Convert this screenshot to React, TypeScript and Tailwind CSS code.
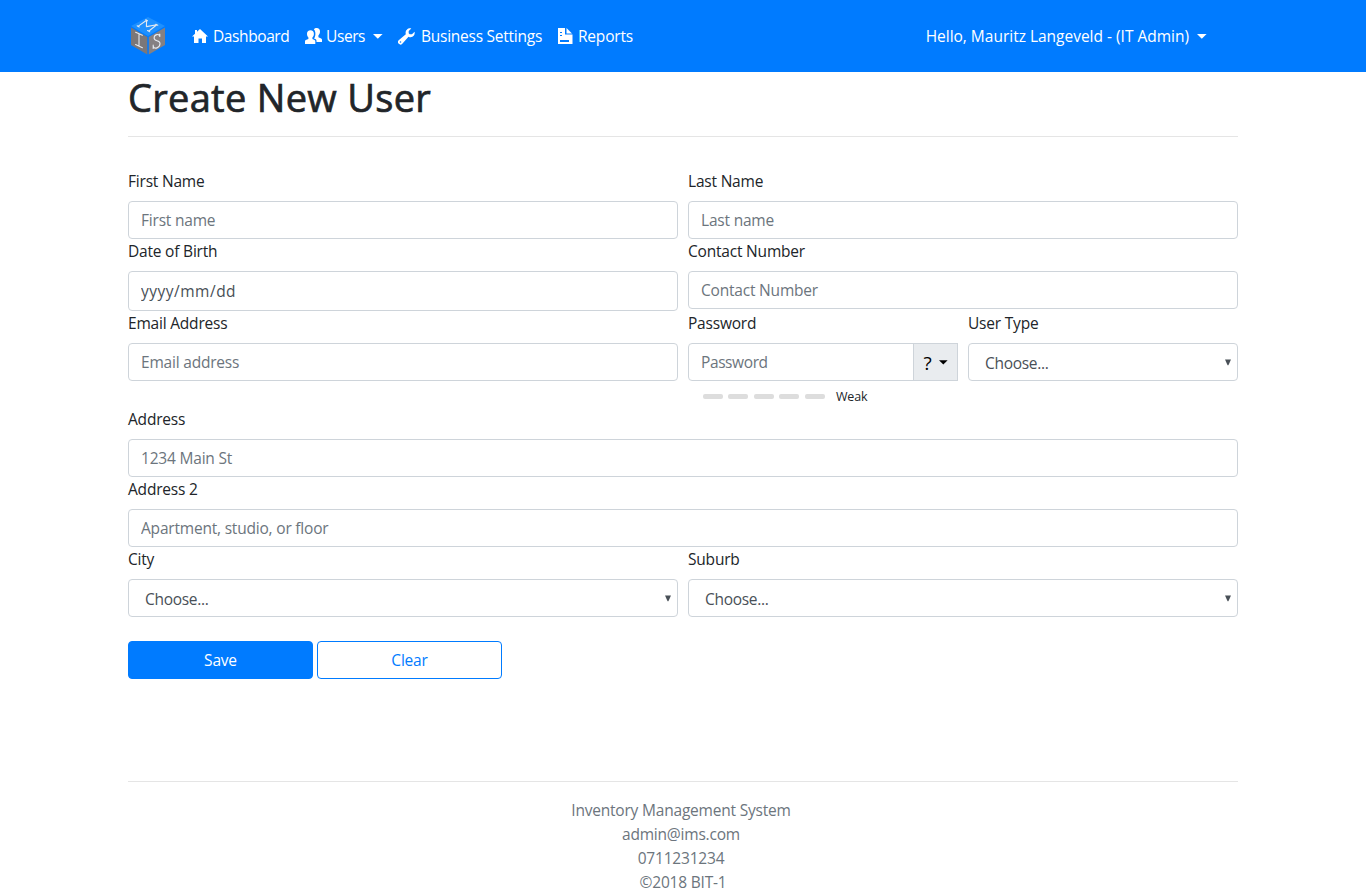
import type { ReactNode } from "react";

const inputBase =
  "block w-full rounded border border-[#ced4da] bg-white px-3 text-[15.5px] tracking-[-0.2px] text-[#495057] placeholder:text-[#6c757d] placeholder:opacity-100 outline-none";

function Field({ label, children, className = "" }: { label: string; children: ReactNode; className?: string }) {
  return (
    <div className={className}>
      <label className="mb-2 block h-6 leading-6">{label}</label>
      {children}
    </div>
  );
}

function Input({ placeholder }: { placeholder: string }) {
  return <input type="text" placeholder={placeholder} className={`${inputBase} h-[38px]`} />;
}

function Select() {
  return (
    <button type="button" className={`${inputBase} flex h-[38px] items-center justify-between pl-4 pr-[6px] text-left`}>
      <span className="pt-[2px] tracking-[-0.3px]">Choose...</span>
      <svg width="6" height="7" viewBox="0 0 6 7" fill="#495057">
        <path d="M0 .5h6L3.400 6.200h-.8z" />
      </svg>
    </button>
  );
}

function Caret({ className = "" }: { className?: string }) {
  return (
    <svg width="10" height="5" viewBox="0 0 10 5" fill="currentColor" className={className}>
      <path d="M0 0h9.6L4.8 4.8z" />
    </svg>
  );
}

function Logo() {
  return (
    <svg width="40" height="40" viewBox="0 0 40 40">
      <path d="M20 1 37 10 20 20 3 10z" fill="#1e90ff" />
      <path d="M3 11.5 19.3 21v17.5L3 29z" fill="#7b7779" />
      <path d="M37 11.5 20.8 21v17.5L37 29z" fill="#858083" />
      <g fill="none" stroke="#e4e9f0" strokeWidth="1.1" strokeLinecap="round" strokeLinejoin="round">
        <path d="M10 10.400 18.600 4.200 18.400 10.600 28.800 8.800 20.600 15.200M17.700 3.800l1.800.9M27.800 8.200l2 1M9.200 9.800l2 1.200M19.500 14.600l2.200 1.100" />
        <path d="M7.600 16.200l6.800 3M11 17.700v12.500M7.600 28.500l6.800 3.200" />
        <path d="M31.700 20.500c-.5-3.200-5.500-2.300-5.600 1.400 0 3.800 5.900 1.800 5.900 5.600 0 4.200-6 6.600-6.700 2.500M31.800 18v2.500M25.200 29v3.500" />
      </g>
    </svg>
  );
}

function HomeIcon() {
  return (
    <svg width="16" height="14" viewBox="0 0 16 14" fill="white">
      <path d="M8 0 16 7.500H14V14H10V9.500H6.500V14H2V7.500H0L3 4.700V1h2v1.800z" />
    </svg>
  );
}

function UsersIcon() {
  return (
    <svg width="17" height="16" viewBox="0 0 17 16" fill="white">
      <path d="M5.500 2.200c2.200 0 3.400 1.300 3.400 3.500 0 1.700-.6 3-1.500 3.800V11l2.100.9c.6.300.8.700.8 1.300V16H0v-2.800c0-.6.2-1 .8-1.300L3.400 11V9.500C2.600 8.700 2 7.400 2 5.700c0-2.200 1.300-3.500 3.500-3.500z" />
      <path d="M8.800 1.200C9.500.4 10.600 0 11.700 0c2.100 0 3.300 1.400 3.300 3.600 0 1.700-.6 3-1.600 3.800v1.800l2.700 1.200c.6.300.9.700.9 1.300V14h-5.500v-.9c0-1-.4-1.600-1.200-2L9 10.500C9.800 9.500 10.400 7.900 10.400 5.700 10.400 3.700 9.900 2.200 8.800 1.200z" />
    </svg>
  );
}

function WrenchIcon() {
  return (
    <svg width="17" height="17" viewBox="0 0 17 17">
      <path fill="white" fillRule="evenodd" d="M13.300.4 10.700 3v2.300l1 1H14L16.600 3.700C17.100 6.200 15.800 9.200 12.600 9.200c-.8 0-1.500-.1-2.100-.5L4.300 15.700a2.300 2.300 0 0 1-3.600-3.400L7.800 6.200C6.800 3 9.500-.4 13.300.4zM2.500 13.200a.8.800 0 1 0 0 1.600.8.800 0 0 0 0-1.600z" />
    </svg>
  );
}

function ReportIcon() {
  return (
    <svg width="15" height="16" viewBox="0 0 15 16" fill="white">
      <path fillRule="evenodd" d="M0 0h7v6.500h7.500V16H0zM2 4v1h2V4zM2 7v1h2V7zM2 12v2h9v-2z" />
      <path d="M8.500 0v5.500H14z" />
    </svg>
  );
}

export default function App() {
  return (
    <div className="h-[894px] overflow-hidden bg-white font-['Open_Sans','Noto_Sans',sans-serif] text-[15.5px] leading-6 tracking-[-0.2px] text-[#212529]">
      <nav className="h-[72px] bg-[#007bff] text-white">
        <div className="mx-auto flex h-full w-[1110px] items-center">
          <div className="w-[64px]"><Logo /></div>
          <a className="flex w-[113px] items-center gap-[5px] tracking-[-0.4px]"><HomeIcon />Dashboard</a>
          <a className="flex w-[93px] items-center">
            <UsersIcon /><span className="ml-1 w-[39px] tracking-[-0.4px]">Users</span><Caret className="ml-2" />
          </a>
          <a className="flex w-[160px] items-center gap-[6px] whitespace-nowrap tracking-[-0.25px]"><WrenchIcon />Business Settings</a>
          <a className="flex items-center gap-[5px]"><ReportIcon />Reports</a>
          <a className="ml-auto mr-[31px] flex items-center gap-2 whitespace-nowrap tracking-[-0.01px]">Hello, Mauritz Langeveld - (IT Admin)<Caret /></a>
        </div>
      </nav>

      <main className="mx-auto w-[1110px]">
        <h1 className="h-[65px] border-b border-[#e5e5e5] pt-px text-[38px] font-normal leading-[48px] tracking-[0.3px] [-webkit-text-stroke:0.7px_#212529]">Create New User</h1>

        <form className="pt-8" autoComplete="off">
          <div className="grid grid-cols-2 gap-x-[10px]">
            <Field label="First Name"><Input placeholder="First name" /></Field>
            <Field label="Last Name"><Input placeholder="Last name" /></Field>
            <Field label="Date of Birth">
              <input type="text" placeholder="yyyy/mm/dd" className={`${inputBase} h-10 placeholder:tracking-[0.5px] placeholder:text-[#495057]`} />
            </Field>
            <Field label="Contact Number"><Input placeholder="Contact Number" /></Field>
            <Field label="Email Address"><Input placeholder="Email address" /></Field>
            <div className="grid h-24 grid-cols-2 gap-x-[10px]">
              <Field label="Password">
                <div className="flex">
                  <input type="text" placeholder="Password" className={`${inputBase} h-[38px] min-w-0 flex-1 rounded-r-none placeholder:tracking-[-0.4px]`} />
                  <button type="button" className="-ml-px flex h-[38px] w-[45px] items-center justify-center gap-[7px] border border-[#ced4da] bg-[#e9ecef] text-[19px] text-black">
                    <span className="pt-[2px]">?</span><Caret className="w-[9px]" />
                  </button>
                </div>
                <div className="flex h-[26px] items-center pl-[15px] pt-[5px]">
                  <div className="flex w-[133px] gap-[5.4px]">
                    {[0, 1, 2, 3, 4].map((bar) => (
                      <span key={bar} className="h-[5px] w-5 rounded-[2px] bg-[#ddd]" />
                    ))}
                  </div>
                  <span className="text-[12.5px]">Weak</span>
                </div>
              </Field>
              <Field label="User Type"><Select /></Field>
            </div>
          </div>

          <Field label="Address"><Input placeholder="1234 Main St" /></Field>
          <Field label="Address 2"><Input placeholder="Apartment, studio, or floor" /></Field>
          <div className="grid grid-cols-2 gap-x-[10px]">
            <Field label="City"><Select /></Field>
            <Field label="Suburb"><Select /></Field>
          </div>

          <div className="mt-6 flex gap-1">
            <button type="button" className="h-[38px] w-[185px] rounded border border-[#007bff] bg-[#007bff] text-white">Save</button>
            <button type="button" className="h-[38px] w-[185px] rounded border border-[#007bff] bg-white text-[#007bff]">Clear</button>
          </div>
        </form>

        <footer className="mt-[102px] border-t border-[#e5e5e5] pr-[4px] pt-4 text-center text-[#6c757d]">
          <p>Inventory Management System</p>
          <p>admin@ims.com</p>
          <p>0711231234</p>
          <p className="pl-1">©2018 BIT-1</p>
        </footer>
      </main>
    </div>
  );
}
